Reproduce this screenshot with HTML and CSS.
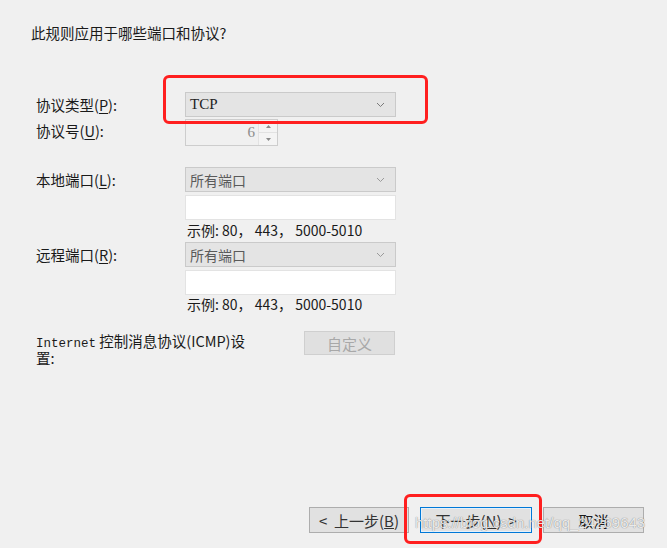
FILE: index.html
```html
<!DOCTYPE html>
<html lang="zh-CN">
<head>
    <meta charset="UTF-8">
    <title>协议和端口</title>
    <link rel="stylesheet" href="styles.css">
</head>
<body>
    <div class="wizard">
        <h1 class="title">此规则应用于哪些端口和协议?</h1>

        <div class="form">
            <div class="row first">
                <span class="label">协议类型(<u>P</u>):</span>
                <div class="select dark">
                    <span class="tcp">TCP</span>
                    <svg class="chevron" width="9" height="6" viewBox="0 0 9 6"><polyline points="1,1 4.5,4.5 8,1" fill="none" stroke="#7a7a7a" stroke-width="1"/></svg>
                </div>
            </div>

            <div class="row proto">
                <span class="label">协议号(<u>U</u>):</span>
                <div class="spin">
                    <span class="spin-value">6</span>
                    <div class="spin-btns">
                        <span class="spin-btn"><svg width="5" height="3" viewBox="0 0 5 3"><polygon points="0,3 2.5,0 5,3" fill="#8a8a8a"/></svg></span>
                        <span class="spin-btn"><svg width="5" height="3" viewBox="0 0 5 3"><polygon points="0,0 2.5,3 5,0" fill="#8a8a8a"/></svg></span>
                    </div>
                </div>
            </div>

            <div class="row local">
                <span class="label">本地端口(<u>L</u>):</span>
                <div class="select">
                    <span>所有端口</span>
                    <svg class="chevron" width="9" height="6" viewBox="0 0 9 6"><polyline points="1,1 4.5,4.5 8,1" fill="none" stroke="#9a9a9a" stroke-width="1"/></svg>
                </div>
            </div>
            <div class="input"></div>
            <div class="hint">示例: 80， 443， 5000-5010</div>

            <div class="row remote">
                <span class="label">远程端口(<u>R</u>):</span>
                <div class="select">
                    <span>所有端口</span>
                    <svg class="chevron" width="9" height="6" viewBox="0 0 9 6"><polyline points="1,1 4.5,4.5 8,1" fill="none" stroke="#9a9a9a" stroke-width="1"/></svg>
                </div>
            </div>
            <div class="input"></div>
            <div class="hint last">示例: 80， 443， 5000-5010</div>

            <div class="row icmp">
                <span class="label wide"><span class="mono">Internet</span> 控制消息协议(ICMP)设<br>置:</span>
                <button class="btn custom" disabled>自定义</button>
            </div>
        </div>

        <div class="footer">
            <button class="btn nav back">&lt;&nbsp; 上一步(<u>B</u>)</button>
            <button class="btn nav next">下一步(<u>N</u>)&nbsp; &gt;</button>
            <button class="btn nav cancel">取消</button>
        </div>
    </div>

    <!-- annotations drawn over the dialog -->
    <div class="mark mark-top"></div>
    <div class="mark mark-bottom"></div>
    <div class="watermark">https://blog.csdn.net/qq_24269643</div>
</body>
</html>
```

FILE: styles.css
```css
* {
    margin: 0;
    padding: 0;
    box-sizing: border-box;
}

body {
    width: 667px;
    height: 548px;
    background: #f0f0f0;
    font-family: "Noto Sans CJK SC", "Liberation Sans", sans-serif;
    font-size: 14px;
    color: #1a1a1a;
    position: relative;
    overflow: hidden;
}

.wizard {
    height: 548px;
    display: flex;
    flex-direction: column;
}

.title {
    font-size: 14.5px;
    font-weight: 400;
    line-height: 20px;
    margin: 23px 0 0 31px;
}

.form {
    margin-left: 36px;
    margin-top: 49px;
}

.row {
    display: flex;
    align-items: center;
}

.label {
    width: 149px;
    font-size: 14.5px;
    line-height: 18px;
}

.label u {
    text-decoration-thickness: 1px;
    text-underline-offset: 2px;
}

.select {
    width: 211px;
    height: 25px;
    background: #e4e4e4;
    border: 1px solid #cacaca;
    display: flex;
    align-items: center;
    justify-content: space-between;
    padding: 0 10px 0 4px;
    color: #5a5a5a;
    font-size: 14px;
}

.select.dark {
    color: #222;
}

.tcp {
    font-family: "Liberation Serif", serif;
    font-size: 15px;
}

.proto {
    margin-top: 2px;
}

.proto .label {
    margin-top: -3px;
}

.spin {
    width: 93px;
    height: 27px;
    border: 1px solid #cdcdcd;
    display: flex;
}

.spin-value {
    flex: 1;
    text-align: right;
    padding-right: 3px;
    line-height: 24px;
    color: #8c8c8c;
    font-family: "Liberation Serif", serif;
    font-size: 15px;
}

.spin-btns {
    width: 19px;
    display: flex;
    flex-direction: column;
    border-left: 1px solid #e2e2e2;
}

.spin-btn {
    flex: 1;
    display: flex;
    align-items: center;
    justify-content: center;
    background: #f4f4f4;
}

.spin-btn + .spin-btn {
    border-top: 1px solid #e2e2e2;
}

.local {
    margin-top: 21px;
}

.remote {
    margin-top: 4px;
}

.input {
    width: 211px;
    height: 25px;
    margin: 3px 0 0 149px;
    background: #fff;
    border: 1px solid #e3e3e3;
}

.hint {
    margin: 2px 0 0 151px;
    line-height: 16px;
    font-size: 14px;
    color: #1a1a1a;
}

.hint.last {
    margin-top: 1px;
}

.icmp {
    margin-top: 19px;
    align-items: flex-start;
}

.label.wide {
    width: 268px;
    line-height: 14px;
    margin-top: 3px;
}

.mono {
    font-family: "Liberation Mono", monospace;
    font-size: 12.5px;
}

.btn {
    font-family: inherit;
    font-size: 15px;
    background: #e1e1e1;
    border: 1px solid #adadad;
    color: #1a1a1a;
}

.custom {
    width: 91px;
    height: 24px;
    background: #e0e0e0;
    border-color: #cfcfcf;
    color: #a8a8a8;
}

.footer {
    margin-top: auto;
    padding: 0 23px 15px 0;
    display: flex;
    justify-content: flex-end;
    gap: 11px;
}

.nav {
    height: 26px;
}

.back {
    width: 100px;
    color: #333;
}

.next {
    width: 112px;
    border-color: #0078d7;
    box-shadow: inset 0 0 0 1px #e5f1fb;
    color: #333;
}

.cancel {
    width: 101px;
}

.mark {
    position: absolute;
    border: 3px solid #ff1f1f;
    border-radius: 6px;
}

.mark-top {
    left: 163px;
    top: 75px;
    width: 265px;
    height: 49px;
}

.mark-bottom {
    left: 404px;
    top: 494px;
    width: 138px;
    height: 50px;
}

.watermark {
    position: absolute;
    left: 415px;
    top: 514px;
    font-family: "Liberation Sans", sans-serif;
    font-size: 15px;
    color: rgba(255, 255, 255, 0.85);
    text-shadow: 0 0 1px rgba(0, 0, 0, 0.35), 0 0 1px rgba(0, 0, 0, 0.25);
}
```
